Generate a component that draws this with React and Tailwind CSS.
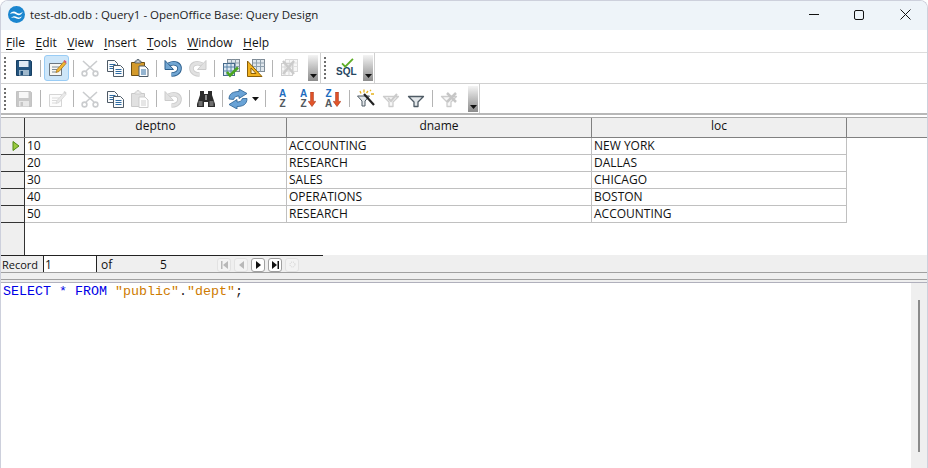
import React from "react";

const Ic = ({ children, dim, w = 20, h = 20, vb = "0 0 20 20" }) => (
  <svg width={w} height={h} viewBox={vb} className={dim ? "opacity-30 grayscale" : ""}>{children}</svg>
);

const Save = ({ dim }) => (
  <Ic dim={dim}>
    <path d="M2.500 2.500h14l1 1v14h-15z" fill="#23547f" stroke="#173f63" />
    <rect x="5" y="3" width="9.500" height="6" fill="#dfeaf3" />
    <rect x="5" y="12" width="10" height="5.500" fill="#9fb8cc" />
    <rect x="6.500" y="13" width="2.500" height="4" fill="#1f4e79" />
  </Ic>
);
const Edit = ({ dim }) => (
  <Ic dim={dim}>
    <path d="M2.500 5.500h12v12h-12z" fill="#f7f7f3" stroke="#6d7780" />
    <path d="M5 9h7M5 11.500h5M5 14h4" stroke="#7c8a96" />
    <path d="M9 14.500l1-3 7-8 2 2-7 8z" fill="#f2b632" stroke="#9a6a12" strokeWidth=".7" />
    <path d="M16.500 3l2.200 2.200 1-1.200-2-2z" fill="#d8506e" />
  </Ic>
);
const Cut = () => (
  <Ic>
    <g opacity=".7" fill="none" stroke="#b4b7ba" strokeWidth="1.600">
      <path d="M3 3l11 10M17 3L6 13" />
      <circle cx="4.500" cy="15.500" r="2.400" />
      <circle cx="15.500" cy="15.500" r="2.400" />
    </g>
  </Ic>
);
const Page = ({ x, y, w = 10, h = 11, c = "#2f6ca3" }) => (
  <g>
    <path d={`M${x} ${y}h${w - 3}l3 3v${h - 3}h-${w}z`} fill="#fbfcfd" stroke="#4d5a66" />
    <path d={`M${x + 2} ${y + 4}h${w - 4}M${x + 2} ${y + 6}h${w - 4}M${x + 2} ${y + 8}h${w - 4}`} stroke={c} />
  </g>
);
const Copy = () => (
  <Ic>
    <Page x={2.500} y={2.500} />
    <Page x={8.500} y={7.500} />
  </Ic>
);
const Paste = ({ dim }) => (
  <Ic dim={dim}>
    <path d="M1.500 4.500h13v13h-13z" fill="#d39a2c" stroke="#6d4f14" />
    <path d="M5 5V3h2V1.500h2V3h2v2z" fill="#c9ccce" stroke="#4d5a66" strokeWidth=".8" />
    <Page x={9} y={8} w={9} h={10.500} />
  </Ic>
);
const UndoShape = () => (
  <g>
    <path d="M6 6.500C12 3.500 17 6.500 16.500 11C16 15 12 16.500 8.500 16.500" fill="none" stroke="#2c5f8d" strokeWidth="4.600" />
    <path d="M6 6.500C12 3.500 17 6.500 16.500 11C16 15 12 16.500 8.500 16.500" fill="none" stroke="#72a6d2" strokeWidth="2.800" />
    <path d="M2 2.500v9h8.500z" fill="#72a6d2" stroke="#2c5f8d" strokeLinejoin="round" />
  </g>
);
const Undo = ({ dim }) => <Ic dim={dim}><UndoShape /></Ic>;
const Redo = () => (
  <svg width="20" height="20" viewBox="0 0 20 20" className="-scale-x-100 opacity-30 grayscale"><UndoShape /></svg>
);
const Table = () => (
  <g>
    <rect x="6.500" y="1.500" width="12" height="12" fill="#dfe6ec" stroke="#7f8b96" />
    <path d="M6.500 5h12M6.500 8.500h12M10.500 1.500v12M14.500 1.500v12" stroke="#8fa0ae" />
    <rect x="2.500" y="5.500" width="11" height="12" fill="#dce7f1" stroke="#45698a" />
    <path d="M2.500 9h11M2.500 13h11M6 5.500v12M10 5.500v12" stroke="#5b84a8" />
  </g>
);
const FormCheck = () => (
  <Ic>
    <Table />
    <path d="M6 14l3 3.500 8-8" fill="none" stroke="#49a51f" strokeWidth="2.600" />
  </Ic>
);
const FormSquare = () => (
  <Ic>
    <rect x="6.500" y="1.500" width="12" height="12" fill="#dfe6ec" stroke="#7f8b96" />
    <path d="M6.500 5h12M6.500 8.500h12M10.500 1.500v12M14.500 1.500v12" stroke="#8fa0ae" />
    <path d="M1.500 18.500V3l14.500 15.500z" fill="#f2b21e" stroke="#8a5f08" />
    <path d="M5 15.500V10l5 5.500z" fill="#fff3cf" stroke="#8a5f08" />
  </Ic>
);
const DelTable = () => (
  <Ic dim>
    <Table />
    <path d="M4 3l11 13M15 3L4 16" stroke="#555" strokeWidth="2.500" />
  </Ic>
);
const Binoc = () => (
  <Ic>
    <path d="M4 2h4v3h4V2h4v4l3 9v3h-7v-5H8v5H1v-3l3-9z" fill="#2c2c2c" />
    <rect x="2.500" y="12" width="4" height="5" fill="#6e6e6e" />
    <rect x="13.500" y="12" width="4" height="5" fill="#6e6e6e" />
    <rect x="9" y="6" width="2" height="5" fill="#8a8a8a" />
  </Ic>
);
const Refresh = () => (
  <Ic>
    <path d="M1 10C1 4.500 5 2.500 11 2.500V0l8 4.500-8 5V7C8 7 6.500 8 5.500 10.500z" fill="#6aa3d6" stroke="#2a5f90" strokeWidth=".8" />
    <path d="M19 9.500c0 6-4 8-10 8V20l-8-4.500 8-5V13c3 0 4.500-1 5.500-3.500z" fill="#6aa3d6" stroke="#2a5f90" strokeWidth=".8" />
  </Ic>
);
const Drop = () => (
  <svg width="7" height="4" viewBox="0 0 7 4"><path d="M0 0h7L3.500 4z" fill="#111" /></svg>
);
const Sort = ({ a, z, arrow }) => (
  <div className="relative w-[20px] h-[22px] font-['Liberation_Sans',sans-serif]">
    <div className={`absolute top-[1px] text-[10px] leading-[9px] font-bold text-center w-[10px] text-[#1c6cc0] ${arrow ? "left-[1px]" : "left-[5px]"}`}>{a}</div>
    <div className={`absolute top-[11px] text-[10px] leading-[9px] font-bold text-center w-[10px] text-[#51585e] ${arrow ? "left-[1px]" : "left-[5px]"}`}>{z}</div>
    {arrow && (
      <svg width="8" height="15" viewBox="0 0 8 16" className="absolute left-[10px] top-[4px]">
        <path d="M2.500 0h3v10H8l-4 5.500L0 10h2.500z" fill="#e2552a" stroke="#a52c10" strokeWidth=".6" />
      </svg>
    )}
  </div>
);
const FUNNEL = "M2.500 7.500h15L12 13v4.500H8V13z";
const Funnel = ({ dim, children }) => (
  <Ic dim={dim}>
    <path d={FUNNEL} fill="#e3e7ea" stroke="#4f5b65" strokeWidth="1.300" strokeLinejoin="round" />
    {children}
  </Ic>
);
const Wand = () => (
  <Ic>
    <path d="M1.500 7h12L9 12v5H6v-5z" fill="#e3e7ea" stroke="#4f5b65" />
    <path d="M8 5l10 11" stroke="#222" strokeWidth="2.200" />
    <path d="M4 2l1 2.500M8 .5v3M12 2l-1.500 2M15 5h3M14 1l1 1" stroke="#e6b31e" strokeWidth="1.300" />
  </Ic>
);

const Btn = ({ children, active, w = "w-[25px]" }) => (
  <div className={`${w} h-[26px] flex items-center justify-center shrink-0 rounded-[3px] ${active ? "bg-[#cde6f9] border border-[#99ccf5]" : ""}`}>{children}</div>
);
const Sep = ({ w = "w-[8px]" }) => (
  <div className={`${w} h-[26px] flex items-center justify-center shrink-0`}>
    <div className="w-px h-[17px] bg-[#b4b4b4]" />
  </div>
);
const Grip = () => (
  <div className="w-[10px] shrink-0 flex flex-col gap-[2px] pl-[3px] justify-center h-[26px]">
    {[0, 1, 2, 3, 4, 5].map((i) => <div key={i} className="w-[2px] h-[2px] bg-[#6e6e6e]" />)}
  </div>
);
const Handle = () => (
  <div className="w-[10px] h-[26px] shrink-0 flex items-end justify-center pb-[3px] bg-gradient-to-b from-[#f4f4f4] to-[#8c8c8c]">
    <Drop />
  </div>
);
const Sql = () => (
  <div className="relative w-[22px] h-[22px]">
    <div className="absolute left-[2px] top-[10px] text-[10px] leading-[10px] font-bold text-[#25465f] font-['Liberation_Sans',sans-serif]">SQL</div>
    <svg width="13" height="10" viewBox="0 0 14 11" className="absolute left-[7px] top-[1px]">
      <path d="M1 6l3.500 3.500L13 1" fill="none" stroke="#5fae27" strokeWidth="2" />
    </svg>
  </div>
);

const NavB = ({ dim, children }) => (
  <div className={`w-[14px] h-[14px] flex items-center justify-center rounded-[3px] border ${dim ? "border-[#e2e2e2] bg-[#f3f3f3]" : "border-[#a0a0a0] bg-white"}`}>
    {children}
  </div>
);

const rows = [
  ["10", "ACCOUNTING", "NEW YORK"],
  ["20", "RESEARCH", "DALLAS"],
  ["30", "SALES", "CHICAGO"],
  ["40", "OPERATIONS", "BOSTON"],
  ["50", "RESEARCH", "ACCOUNTING"],
];

const Menu = ({ u, rest }) => (
  <span><span className="underline underline-offset-2">{u}</span>{rest}</span>
);

export default function App() {
  return (
    <div className="w-[928px] h-[468px] bg-white overflow-hidden rounded-t-[8px] border-x border-t border-[#cdd0dc] flex flex-col text-[12px] leading-[16px] text-[#111] font-['Open_Sans','Noto_Sans',sans-serif]">
      {/* title bar */}
      <div className="h-[29px] shrink-0 bg-[#eef4f9] flex items-center pl-[7px]">
        <svg width="17" height="17" viewBox="0 0 17 17" className="mb-[2px]">
          <circle cx="8.500" cy="8.500" r="8.500" fill="#1b86cf" />
          <path d="M2 8c2-3 4.500-3 6.500-1.500S12 8 15 5.500C13.500 9 11 10 8.500 8.500S4.500 6.800 2 8zM3 12c2-2 4-2 6-1s3.500.5 5-1c-1 3-3.500 3.500-5.500 2.500S5 11 3 12z" fill="#fff" />
        </svg>
        <div className="ml-[5px] mb-[1px] text-[11.500px] text-[#222]">test-db.odb : Query1 - OpenOffice Base: Query Design</div>
        <div className="ml-auto flex items-center mb-[2px]">
          <div className="w-[45px] pl-[3px] flex justify-center"><div className="w-[10px] h-px bg-[#111]" /></div>
          <div className="w-[46px] pl-[2px] flex justify-center"><div className="w-[10px] h-[10px] border border-[#111] rounded-[2px]" /></div>
          <div className="w-[46px] pl-[2px] flex justify-center">
            <svg width="11" height="11" viewBox="0 0 11 11"><path d="M.5.5l10 10M10.500.5l-10 10" stroke="#111" /></svg>
          </div>
        </div>
      </div>
      {/* menu */}
      <div className="h-[23px] shrink-0 flex items-center pl-[5px] pt-[3px] gap-[10.500px] border-b border-[#dcdcdc] text-[12px]">
        <Menu u="F" rest="ile" />
        <Menu u="E" rest="dit" />
        <Menu u="V" rest="iew" />
        <Menu u="I" rest="nsert" />
        <Menu u="T" rest="ools" />
        <Menu u="W" rest="indow" />
        <Menu u="H" rest="elp" />
      </div>
      {/* toolbar 1 */}
      <div className="h-[31px] shrink-0 border-b border-[#d0d0d0] flex items-center">
        <Grip />
        <Btn><Save /></Btn>
        <Sep />
        <Btn active><Edit /></Btn>
        <Sep />
        <Btn><Cut /></Btn>
        <Btn><Copy /></Btn>
        <Btn><Paste /></Btn>
        <Sep />
        <Btn><Undo /></Btn>
        <Btn><Redo /></Btn>
        <Sep />
        <Btn><FormCheck /></Btn>
        <Btn><FormSquare /></Btn>
        <Sep />
        <Btn><DelTable /></Btn>
        <div className="w-[7px]" />
        <Handle />
        <div className="w-[3px] h-full border-r border-[#d0d0d0]" />
        <Grip />
        <div className="w-[3px]" />
        <Btn w="w-[22px]"><Sql /></Btn>
        <div className="w-[7px]" />
        <Handle />
        <div className="w-[2px] h-full border-r border-[#d0d0d0]" />
      </div>
      {/* toolbar 2 */}
      <div className="h-[31px] shrink-0 border-b-2 border-[#b8b8b8] flex items-center">
        <Grip />
        <Btn><Save dim /></Btn>
        <Sep />
        <Btn><Edit dim /></Btn>
        <Sep />
        <Btn><Cut /></Btn>
        <Btn><Copy /></Btn>
        <Btn><Paste dim /></Btn>
        <Sep />
        <Btn><Undo dim /></Btn>
        <Sep />
        <Btn><Binoc /></Btn>
        <Sep />
        <Btn w="w-[23px]"><Refresh /></Btn>
        <Btn w="w-[12px]"><Drop /></Btn>
        <Sep w="w-[9px]" />
        <Btn><Sort a="A" z="Z" /></Btn>
        <Btn><Sort a="A" z="Z" arrow /></Btn>
        <Btn><Sort a="Z" z="A" arrow /></Btn>
        <Sep />
        <Btn><Wand /></Btn>
        <Btn>
          <Funnel dim><path d="M7 9l3 3 6-7" fill="none" stroke="#555" strokeWidth="2" /></Funnel>
        </Btn>
        <Btn><Funnel /></Btn>
        <Sep />
        <Btn>
          <Funnel dim><path d="M8 4l9 9M17 4l-9 9" stroke="#444" strokeWidth="2.500" /></Funnel>
        </Btn>
        <div className="w-[7px]" />
        <Handle />
        <div className="w-[2px] h-full border-r border-[#d0d0d0]" />
      </div>
      {/* grid */}
      <div className="h-[2px] shrink-0" />
      <div className="flex-none h-[138px] flex flex-col border-t border-[#a8a8a8]">
        <div className="h-[20px] shrink-0 flex bg-[#efefef] border-b border-[#808080]">
          <div className="w-[24px] shrink-0 border-r border-[#333]" />
          <div className="w-[262px] shrink-0 border-r border-[#808080] text-center">deptno</div>
          <div className="w-[305px] shrink-0 border-r border-[#808080] text-center">dname</div>
          <div className="w-[255px] shrink-0 border-r border-[#808080] text-center">loc</div>
        </div>
        <div className="flex-1 flex">
          <div className="w-[24px] shrink-0 bg-[#efefef] border-r border-[#333] flex flex-col">
            {rows.map((r, i) => (
              <div key={r[0]} className="h-[17px] border-b border-[#333] flex items-center justify-center pl-[7px]">
                {i === 0 && (
                  <svg width="8" height="10" viewBox="0 0 8 10"><path d="M1 .5l6 4.500-6 4.500z" fill="#9bc93f" stroke="#4f8a12" /></svg>
                )}
              </div>
            ))}
          </div>
          <div className="flex flex-col">
            {rows.map((r) => (
              <div key={r[0]} className="h-[17px] flex border-b border-[#c0c0c0]">
                <div className="w-[262px] shrink-0 border-r border-[#c0c0c0] pl-[2px] leading-[15px]">{r[0]}</div>
                <div className="w-[305px] shrink-0 border-r border-[#c0c0c0] pl-[2px] leading-[15px]">{r[1]}</div>
                <div className="w-[255px] shrink-0 border-r border-[#c0c0c0] pl-[2px] leading-[15px]">{r[2]}</div>
              </div>
            ))}
          </div>
        </div>
      </div>
      {/* record bar */}
      <div className="h-[17px] shrink-0 flex bg-[#efefef] w-full relative">
        <div className="absolute top-0 left-0 w-[322px] h-px bg-[#222]" />
        <div className="w-[43px] shrink-0 pl-[1px] border-r border-[#222] leading-[19px] text-[11px]">Record</div>
        <div className="w-[53px] shrink-0 bg-white border-t border-r border-[#222] pl-px leading-[18px]">1</div>
        <div className="pl-[4px] w-[63px] shrink-0 leading-[19px]">of</div>
        <div className="w-[57px] shrink-0 leading-[19px]">5</div>
        <div className="flex items-center gap-[3px] mt-[2px]">
          <NavB dim><svg width="7" height="8" viewBox="0 0 7 8"><path d="M0 0h1.500v8H0zM7 0v8L2 4z" fill="#b8b8b8" /></svg></NavB>
          <NavB dim><svg width="5" height="8" viewBox="0 0 5 8"><path d="M5 0v8L0 4z" fill="#b8b8b8" /></svg></NavB>
          <NavB><svg width="5" height="8" viewBox="0 0 5 8"><path d="M0 0v8l5-4z" fill="#111" /></svg></NavB>
          <NavB><svg width="7" height="8" viewBox="0 0 7 8"><path d="M0 0v8l5-4zM5.500 0H7v8H5.500z" fill="#111" /></svg></NavB>
          <NavB dim><svg width="7" height="7" viewBox="0 0 7 7"><circle cx="3.500" cy="3.500" r="2.500" fill="none" stroke="#d0d0d0" strokeDasharray="1 1" /></svg></NavB>
        </div>
      </div>
      {/* splitter */}
      <div className="h-[11px] shrink-0 bg-[#efefef] border-t border-[#a0a0a0] flex flex-col">
        <div className="h-[6px]" />
        <div className="h-px bg-[#a0a0a0]" />
        <div className="h-[2px]" />
        <div className="h-px bg-[#b0b0bc]" />
      </div>
      {/* editor */}
      <div className="flex-1 flex min-h-0">
        <div className="flex-1 pl-[2px] pt-[1px] text-[13.330px] leading-[15px] font-['Liberation_Mono',monospace] text-[#222] whitespace-pre">
          <span className="text-[#0000e6]">SELECT</span>{" "}
          <span className="text-[#0000e6]">*</span>{" "}
          <span className="text-[#0000e6]">FROM</span>{" "}
          <span className="text-[#ce7b00]">"public"</span>
          <span>.</span>
          <span className="text-[#ce7b00]">"dept"</span>
          <span>;</span>
        </div>
        <div className="w-[16px] shrink-0 bg-[#efefef] flex justify-center pt-[17px] pb-[16px]">
          <div className="w-[2px] h-full bg-[#8a8a8a]" />
        </div>
      </div>
    </div>
  );
}
